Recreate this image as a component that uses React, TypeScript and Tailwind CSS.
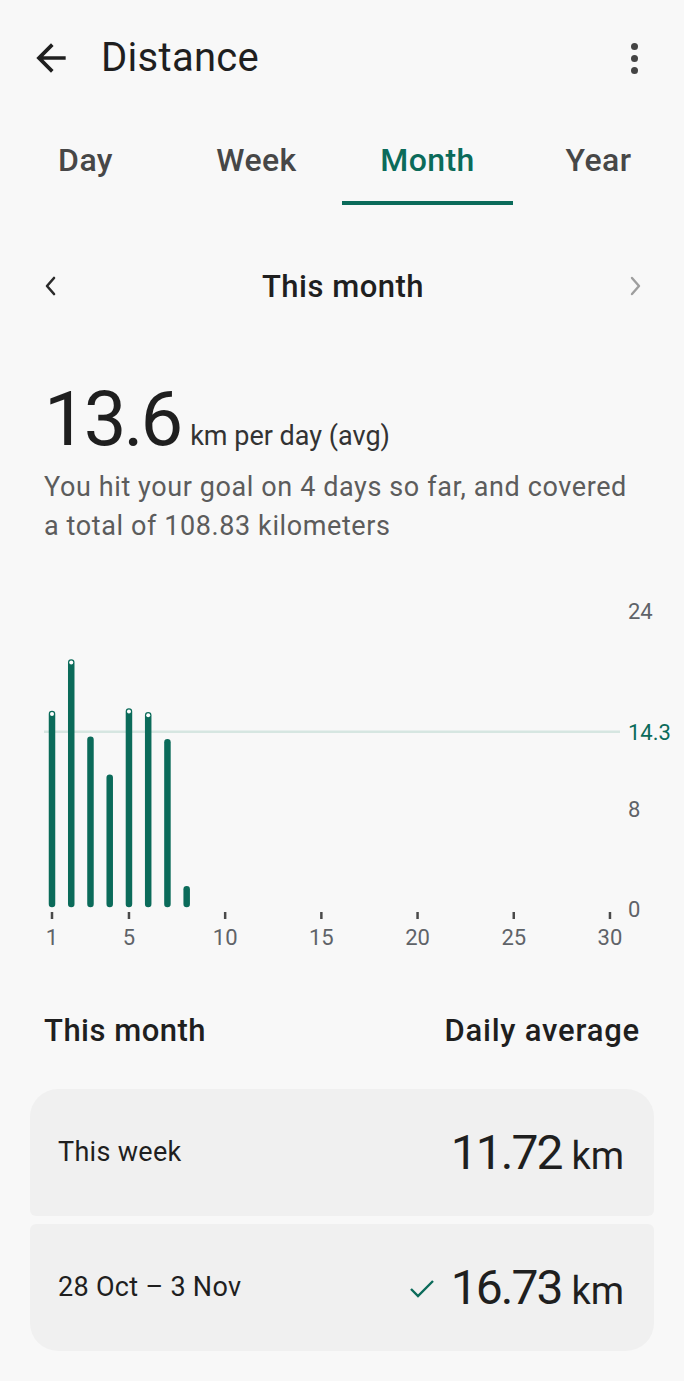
import React from "react";

const days = [16.0, 20.2, 13.9, 10.8, 16.2, 15.9, 13.7, 1.7];
const goal = 14.3;

// chart geometry, in px of the 684-wide svg (top of svg = page y 590)
const baseY = 318;
const unit = 12.25;
const dayX = (d: number) => 52 + (d - 1) * 19.24;

function Chart() {
  return (
    <svg width="684" height="370" viewBox="0 0 684 370" className="block">
      <line x1="44" x2="620" y1={baseY - goal * unit} y2={baseY - goal * unit} stroke="#d6e6e1" strokeWidth="2.5" />
      {days.map((v, i) => {
        const x = dayX(i + 1);
        const top = baseY - v * unit;
        const hit = v >= goal;
        return (
          <g key={i}>
            <line x1={x} x2={x} y1={baseY - 3} y2={top + 3} stroke="#0b6b5a" strokeWidth="6.5" strokeLinecap="round" />
            {hit && <circle cx={x} cy={top + 3} r="2" fill="#ffffff" />}
          </g>
        );
      })}
      {[1, 5, 10, 15, 20, 25, 30].map((d) => (
        <g key={d}>
          <line x1={dayX(d)} x2={dayX(d)} y1="323" y2="330" stroke="#4a4a4a" strokeWidth="2.5" />
          <text x={dayX(d)} y="356" textAnchor="middle" fontSize="22" fill="#5f6368" fontFamily="Roboto, sans-serif">
            {d}
          </text>
        </g>
      ))}
      <text x="628" y="30" fontSize="22" fill="#5f6368" fontFamily="Roboto, sans-serif">24</text>
      <text x="628" y="151" fontSize="22" fill="#0b6b5a" fontFamily="Roboto, sans-serif">14.3</text>
      <text x="628" y="228" fontSize="22" fill="#5f6368" fontFamily="Roboto, sans-serif">8</text>
      <text x="628" y="328" fontSize="22" fill="#5f6368" fontFamily="Roboto, sans-serif">0</text>
    </svg>
  );
}

export default function App() {
  const tabs = ["Day", "Week", "Month", "Year"];
  return (
    <div className="w-[684px] h-[1381px] bg-[#f8f8f8] text-[#1f1f1f] font-['Roboto',sans-serif] overflow-hidden">
      {/* top bar */}
      <div className="h-[116px] flex items-center pl-[29px] pr-[46px]">
        <svg width="44" height="44" viewBox="0 0 24 24" fill="#1f1f1f">
          <path d="M20 11H7.83l5.59-5.59L12 4l-8 8 8 8 1.41-1.41L7.83 13H20v-2z" />
        </svg>
        <h1 className="ml-[28px] text-[40px] leading-none tracking-[0.3px]">Distance</h1>
        <div className="ml-auto flex flex-col gap-[5px] items-center w-[8px]">
          <span className="w-[7px] h-[7px] rounded-full bg-[#444]" />
          <span className="w-[7px] h-[7px] rounded-full bg-[#444]" />
          <span className="w-[7px] h-[7px] rounded-full bg-[#444]" />
        </div>
      </div>

      {/* tabs */}
      <div className="grid grid-cols-4 h-[90px]">
        {tabs.map((t) => (
          <div key={t} className="flex flex-col items-center">
            <span
              className={
                "mt-[27px] text-[32px] leading-[34px] font-medium tracking-[0.4px] " +
                (t === "Month" ? "text-[#0b6b5a]" : "text-[#474747]")
              }
            >
              {t}
            </span>
            {t === "Month" && <div className="mt-auto mb-[1px] w-full h-[4px] bg-[#0b6b5a]" />}
          </div>
        ))}
      </div>

      {/* period nav */}
      <div className="mt-[60px] h-[40px] flex items-center justify-between pl-[42px] pr-[40px]">
        <svg width="16" height="24" viewBox="0 0 16 24">
          <path d="M12 4 L5 12 L12 20" fill="none" stroke="#2a2a2a" strokeWidth="2.6" strokeLinecap="round" strokeLinejoin="round" />
        </svg>
        <span className="text-[31px] leading-none font-medium tracking-[0.5px]">This month</span>
        <svg width="16" height="24" viewBox="0 0 16 24">
          <path d="M4 4 L11 12 L4 20" fill="none" stroke="#9e9e9e" strokeWidth="2.4" strokeLinecap="round" strokeLinejoin="round" />
        </svg>
      </div>

      {/* headline */}
      <div className="mt-[75px] px-[44px]">
        <div className="flex items-baseline">
          <span className="text-[76px] leading-none tracking-[-3px]">13.6</span>
          <span className="ml-[10px] text-[27px] leading-none text-[#333]">km per day (avg)</span>
        </div>
        <p className="mt-[11px] text-[27px] leading-[39px] tracking-[0.6px] text-[#5c5c5c] w-[596px]">
          You hit your goal on 4 days so far, and covered a total of 108.83 kilometers
        </p>
      </div>

      {/* chart */}
      <div className="mt-[43px]">
        <Chart />
      </div>

      {/* summary */}
      <div className="mt-[52px] px-[44px] h-[40px] flex items-center justify-between">
        <span className="text-[31px] font-medium tracking-[0.5px]">This month</span>
        <span className="text-[31px] font-medium tracking-[0.8px]">Daily average</span>
      </div>

      <div className="mt-[38px] px-[30px] flex flex-col gap-[8px]">
        <div className="h-[127px] bg-[#f0f0f0] rounded-t-[28px] rounded-b-[6px] flex items-center justify-between pl-[28px] pr-[30px]">
          <span className="text-[27px] tracking-[0.3px]">This week</span>
          <span className="flex items-baseline">
            <span className="text-[48px] leading-none tracking-[-2px]">11.72</span>
            <span className="ml-[10px] text-[38px] leading-none">km</span>
          </span>
        </div>
        <div className="h-[127px] bg-[#f0f0f0] rounded-b-[28px] rounded-t-[6px] flex items-center justify-between pl-[28px] pr-[30px]">
          <span className="text-[27px] tracking-[0.3px]">28 Oct – 3 Nov</span>
          <span className="flex items-baseline">
            <svg width="26" height="20" viewBox="0 0 26 20" className="mr-[16px] self-center">
              <path d="M2 11 L9 18 L24 3" fill="none" stroke="#0b6b5a" strokeWidth="2.4" />
            </svg>
            <span className="text-[48px] leading-none tracking-[-2px]">16.73</span>
            <span className="ml-[10px] text-[38px] leading-none">km</span>
          </span>
        </div>
      </div>
    </div>
  );
}
